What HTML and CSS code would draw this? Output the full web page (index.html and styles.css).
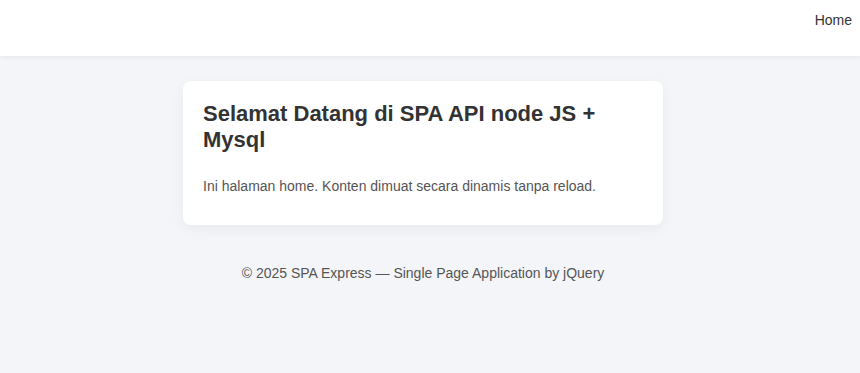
FILE: index.html
```html
<!DOCTYPE html>
<html lang="en">

<head>
    <meta charset="UTF-8">
    <meta name="viewport" content="width=device-width, initial-scale=1.0">
    <link rel="stylesheet" href="styles.css">
    <title>SPA Express</title>
</head>

<body>
    <header class="navbar">
        <nav class="nav-links">
            <a href="#home" class="nav-link">Home</a>
        </nav>
    </header>

    <div class="page">
        <main class="card">
            <h2 class="card-title">Selamat Datang di SPA API node JS + Mysql</h2>
            <p class="card-text">Ini halaman home. Konten dimuat secara dinamis tanpa reload.</p>
        </main>

        <footer class="footer">
            &copy; 2025 SPA Express &mdash; Single Page Application by jQuery
        </footer>
    </div>
</body>

</html>
```

FILE: styles.css
```css
body {
  margin: 0;
  background: #f4f5f9;
  font-family: "Liberation Sans", Arial, sans-serif;
  color: #333333;
  min-height: 373px;
}

.navbar {
  height: 56px;
  background: #ffffff;
  box-shadow: 0 2px 4px rgba(0, 0, 0, 0.05);
  display: flex;
  justify-content: flex-end;
  padding: 0 8px;
}

.nav-links {
  display: flex;
  padding-top: 11px;
}

.nav-link {
  font-size: 14px;
  color: #333333;
  text-decoration: none;
  line-height: 18px;
}

.page {
  padding-right: 14px;
}

.card {
  display: block;
  width: 440px;
  margin: 25px auto 0;
  padding: 20px;
  background: #ffffff;
  border-radius: 8px;
  box-shadow: 0 4px 14px rgba(0, 0, 0, 0.05);
}

.card-title {
  margin: 0 0 22px;
  font-size: 22px;
  line-height: 26px;
  color: #333333;
}

.card-text {
  margin: 0 0 8px;
  font-size: 14px;
  line-height: 22px;
  color: #555555;
}

.footer {
  margin-top: 38px;
  text-align: center;
  font-size: 14px;
  line-height: 20px;
  color: #555555;
}
```
